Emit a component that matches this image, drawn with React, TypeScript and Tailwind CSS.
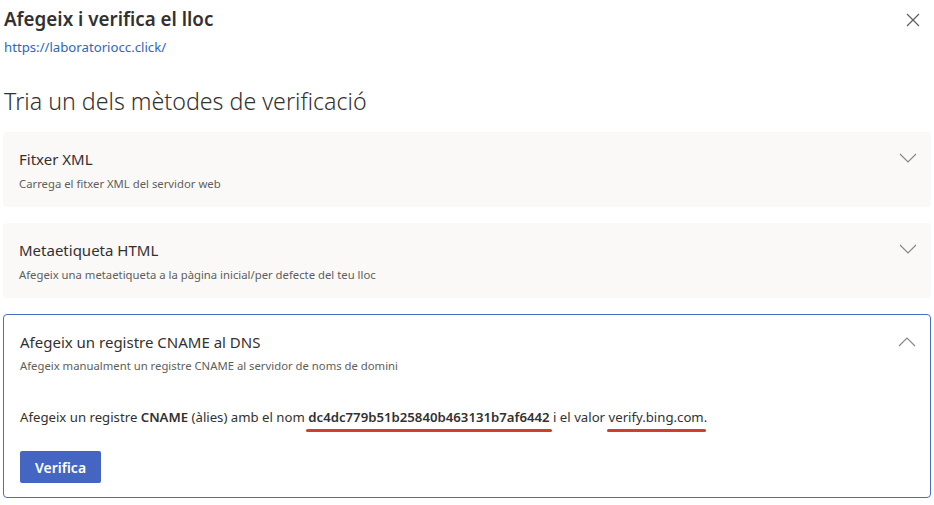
import React from 'react';

const Chevron: React.FC<{ up?: boolean }> = ({ up }) => (
  <svg width="18" height="10" viewBox="0 0 18 10" fill="none" className="shrink-0">
    <path
      d={up ? 'M1 9L9 1L17 9' : 'M1 1L9 9L17 1'}
      stroke="#8a8886"
      strokeWidth="1.2"
    />
  </svg>
);

const Marked: React.FC<{ children: React.ReactNode; bold?: boolean }> = ({ children, bold }) => (
  <span className={`relative ${bold ? 'font-semibold' : ''}`}>
    {children}
    <span className="absolute left-[-2px] right-[-2px] bottom-[-6px] h-[3px] rounded-full bg-[#d03f2b]"></span>
  </span>
);

const Method: React.FC<{ title: string; sub: string }> = ({ title, sub }) => (
  <div className="mx-[3px] mb-[16px] h-[75px] rounded-[4px] bg-[#faf9f8] px-[16px] flex items-center justify-between">
    <div>
      <div className="text-[15px] leading-[22px] text-[#323130]">{title}</div>
      <div className="mt-[6px] text-[11.3px] leading-[16px] text-[#605e5c]">{sub}</div>
    </div>
    <div className="mr-[-2px] mb-[24px]">
      <Chevron />
    </div>
  </div>
);

export default function App() {
  return (
    <div className="w-[934px] h-[505px] overflow-hidden bg-white text-[#323130] font-['Segoe_UI','Noto_Sans',sans-serif]">
      <div className="flex items-start justify-between pl-[4px] pr-[14px] pt-[5px]">
        <div>
          <h1 className="text-[18.8px] leading-[28px] font-semibold text-[#323130]">Afegeix i verifica el lloc</h1>
          <a className="block mt-[4px] text-[13.2px] leading-[20px] text-[#2b66c4]">https://laboratoriocc.click/</a>
        </div>
        <svg width="14" height="14" viewBox="0 0 14 14" className="mt-[8px]">
          <path d="M1 1L13 13M13 1L1 13" stroke="#605e5c" strokeWidth="1.2" />
        </svg>
      </div>

      <h2 className="pl-[4px] mt-[28px] mb-[15px] text-[23.2px] leading-[32px] font-light text-[#323130]">
        Tria un dels mètodes de verificació
      </h2>

      <Method title="Fitxer XML" sub="Carrega el fitxer XML del servidor web" />
      <Method title="Metaetiqueta HTML" sub="Afegeix una metaetiqueta a la pàgina inicial/per defecte del teu lloc" />

      <div className="mx-[3px] h-[184px] rounded-[4px] border border-[#4a6dc4] bg-white px-[16px] pt-[16px]">
        <div className="flex items-start justify-between">
          <div>
            <div className="text-[15px] leading-[22px] text-[#323130]">Afegeix un registre CNAME al DNS</div>
            <div className="mt-[5px] text-[11.3px] leading-[16px] text-[#605e5c]">
              Afegeix manualment un registre CNAME al servidor de noms de domini
            </div>
          </div>
          <div className="mt-[6px] mr-[-2px]">
            <Chevron up />
          </div>
        </div>
        <p className="mt-[33px] text-[13.2px] leading-[20px] text-[#323130]">
          Afegeix un registre <span className="font-semibold">CNAME</span> (àlies) amb el nom{' '}
          <Marked bold>dc4dc779b51b25840b463131b7af6442</Marked> i el valor <Marked>verify.bing.com</Marked>.
        </p>
        <button className="mt-[24px] h-[32px] w-[81px] rounded-[2px] bg-[#4466c2] text-[14px] font-semibold text-white">
          Verifica
        </button>
      </div>
    </div>
  );
}
